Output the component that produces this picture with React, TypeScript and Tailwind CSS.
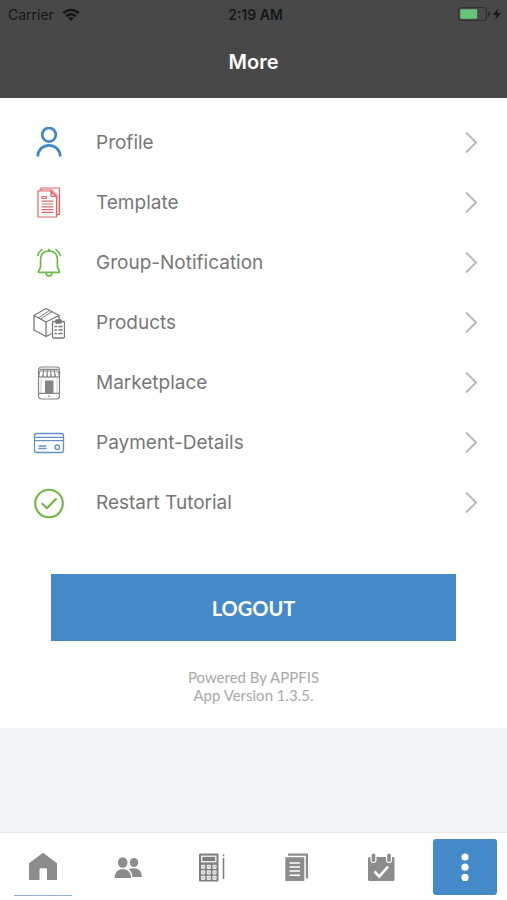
import type { ReactNode } from "react";

const line = {
  fill: "none",
  strokeLinecap: "round" as const,
  strokeLinejoin: "round" as const,
};

function Icon({ className = "", children }: { className?: string; children: ReactNode }) {
  return (
    <svg viewBox="0 0 32 32" className={`size-8 shrink-0 ${className}`} aria-hidden="true">
      {children}
    </svg>
  );
}

/* ── Menu icons ─────────────────────────────────────────────────────── */

function ProfileIcon() {
  return (
    <Icon className="text-[#3f87c9]">
      <g fill="none" stroke="currentColor" strokeWidth="2.7">
        <circle cx="16" cy="7.8" r="6.8" />
        <path d="M4.800 29.500c0-6.300 4.900-11.200 11.200-11.200s11.200 4.900 11.200 11.200" />
      </g>
    </Icon>
  );
}

function TemplateIcon() {
  return (
    <Icon className="text-[#d9696b]">
      <g {...line} stroke="currentColor" strokeWidth="1.200">
        <path d="M8 3V1h18.500v26.500H24" />
        <path d="M5 4h13l5.500 5.500V30H5z" />
        <path d="M18 4v5.500h5.500z" fill="currentColor" fillOpacity=".35" />
        <path d="M6.500 2.700h12.500l6 6v19.500" opacity=".6" />
        <path d="M9 9.500h4.500v2H9z" />
        <path d="M9 14.200h11M9 17h11M9 19.800h11M9 22.600h11M9 25.400h11" />
      </g>
    </Icon>
  );
}

function BellIcon() {
  return (
    <Icon className="text-[#6cbb4a]">
      <g {...line} stroke="currentColor" strokeWidth="1.700">
        <path d="M16 3.800c-5 0-8.400 3.500-8.400 8.500v7.500c0 2-2.100 2.700-2.100 5.500h21c0-2.800-2.100-3.500-2.100-5.500v-7.500c0-5-3.400-8.500-8.400-8.500z" />
        <path d="M16 3.800V2.300" />
        <path d="M13 26c.3 1.800 1.400 2.900 3 2.900s2.700-1.100 3-2.900" />
        <path d="M4.800 8.500c.6-2.400 1.900-4.400 4.200-5.900M27.200 8.500c-.6-2.400-1.900-4.400-4.200-5.900" />
      </g>
    </Icon>
  );
}

function ProductsIcon() {
  return (
    <Icon className="text-[#787878]">
      <g {...line} stroke="currentColor" strokeWidth="1.300">
        <path d="M18 27l-5 2.500L1 23V8.500l12-7 13 7V13" />
        <path d="M1 8.500l12 6.500 13-6.500M13 15v14.500" />
        <path d="M7.500 12l11.500-7.300M5.500 10.800l11-7.300" strokeWidth="1" />
        <rect x="19.500" y="14.500" width="12" height="16.500" rx="1.500" />
        <path d="M23 14v-1h5v3h-5z" fill="currentColor" />
        <path d="M22 19.500h1.500M26 19.500h3M22 23h1.500M26 23h3M22 26.500h1.500M26 26.500h3" strokeWidth="1.500" />
      </g>
    </Icon>
  );
}

function MarketplaceIcon() {
  return (
    <svg viewBox="0 0 32 34" className="h-[34px] w-8 shrink-0 text-[#858585]" aria-hidden="true">
      <g {...line} stroke="currentColor" strokeWidth="1.200">
        <rect x="5.500" y="1" width="21" height="32" rx="3" />
        <path d="M7 3.300h18" />
        <path d="M7 5L5.700 9c0 1.600 1.200 2.200 2.300 2.200s2-.8 2-2c0 1.200.9 2 2 2s2-.8 2-2c0 1.200.9 2 2 2s2-.8 2-2c0 1.200.9 2 2 2s2-.8 2-2c0 1.200.9 2 2 2s2.300-.6 2.300-2.200L25 5z" />
        <path d="M10 9l.7-4M14 9l.3-4M18 9l-.3-4M22 9l-.7-4" />
        <path d="M6 27.300h20" />
        <path d="M15.500 30.200h1" />
      </g>
      <path d="M12 14.500h8.500V27H12z" fill="currentColor" />
      <path d="M8 12.500v14M24 12.500v14" stroke="currentColor" strokeWidth=".6" opacity=".6" />
    </svg>
  );
}

function PaymentIcon() {
  return (
    <Icon className="text-[#6590cc]">
      <g {...line} stroke="currentColor" strokeWidth="1.300">
        <rect x="1.500" y="6.500" width="29" height="19" rx="2.200" />
        <path d="M1.500 10.300h29M1.500 13.700h29" />
        <path d="M6 19h7M6 21.500h7" />
        <circle cx="24.300" cy="20.200" r="2.200" />
      </g>
    </Icon>
  );
}

function TutorialIcon() {
  return (
    <Icon className="text-[#6fb745]">
      <g {...line} stroke="currentColor" strokeWidth="2.100">
        <circle cx="16" cy="16.500" r="13.800" />
        <path d="M9.300 16.800l4.600 4.500 9-9.300" />
      </g>
    </Icon>
  );
}

/* ── Tab bar icons ──────────────────────────────────────────────────── */

function HomeIcon() {
  return (
    <Icon>
      <path d="M16 2.800L30 13.200V30H20V19.300a1 1 0 0 0-1-1h-5.500a1 1 0 0 0-1 1V30H2V13.200z" fill="currentColor" />
    </Icon>
  );
}

function PeopleIcon() {
  return (
    <Icon>
      <g fill="currentColor">
        <ellipse cx="10.700" cy="11.500" rx="4.800" ry="5.200" />
        <path d="M2.600 27c0-5.500 3.200-9 8.200-9s8.200 3.500 8.200 9z" />
        <ellipse cx="22" cy="11.500" rx="4.200" ry="4.600" />
        <path d="M17 18.300c1.300-.7 3-1 5-1 4.800 0 7.900 3.200 7.900 8.700h-9.500c-.3-3.300-1.400-6-3.400-7.700z" />
      </g>
    </Icon>
  );
}

function CalculatorIcon() {
  return (
    <Icon className="text-[#7f7f7f]">
      <rect x="3" y="2.500" width="19.500" height="28" rx="1" fill="currentColor" />
      <rect x="5" y="4.500" width="15.500" height="7" fill="#e6e6e6" />
      <rect x="6.500" y="6" width="12.500" height="4" fill="currentColor" />
      <g fill="#e6e6e6">
        {[13.700, 19.200, 24.700].map((y) =>
          [5, 10.700, 16.400].map((x) => <rect key={`${x}-${y}`} x={x} y={y} width="4.200" height="4.200" rx=".8" />)
        )}
      </g>
      <g stroke="currentColor" strokeWidth=".7" opacity=".6">
        <path d="M6 15.800h2.200M11.700 15.800h2.200M17.400 15.800h2.200M6 21.300h2.200M11.700 21.300h2.200M17.400 21.300h2.200M6 26.800h2.200M11.700 26.800h2.200M17.400 26.800h2.200" />
      </g>
      <path d="M27.500 3.500v1.700M27.500 7v21" stroke="currentColor" strokeWidth="1.600" />
    </Icon>
  );
}

function DocumentsIcon() {
  return (
    <Icon>
      <path d="M7 2.500h20v25h-2.200V4.700H7z" fill="currentColor" />
      <path d="M4.300 6.200H23.300V30H4.300z" fill="currentColor" />
      <path d="M8.500 12h10.500M8.500 16h10.500M8.500 20h10.500M8.500 24.200h10.500" stroke="#fff" strokeWidth="1.400" />
    </Icon>
  );
}

function CalendarIcon() {
  return (
    <Icon>
      <rect x="3" y="6" width="26.500" height="24" rx="1.500" fill="currentColor" />
      <rect x="5.500" y="2" width="6" height="10" rx="3" fill="#fff" />
      <rect x="21" y="2" width="6" height="10" rx="3" fill="#fff" />
      <rect x="6.700" y="2.500" width="3.600" height="8.500" rx="1.800" fill="currentColor" />
      <rect x="22.200" y="2.500" width="3.600" height="8.500" rx="1.800" fill="currentColor" />
      <path d="M9.500 20.500l4.700 5L23 15.700" fill="none" stroke="#fff" strokeWidth="2.600" />
    </Icon>
  );
}

function DotsIcon() {
  return (
    <Icon>
      <g fill="currentColor">
        <circle cx="16" cy="6" r="3.600" />
        <circle cx="16" cy="16.200" r="3.600" />
        <circle cx="16" cy="26.400" r="3.600" />
      </g>
    </Icon>
  );
}

const menu = [
  { label: "Profile", icon: <ProfileIcon /> },
  { label: "Template", icon: <TemplateIcon /> },
  { label: "Group-Notification", icon: <BellIcon /> },
  { label: "Products", icon: <ProductsIcon /> },
  { label: "Marketplace", icon: <MarketplaceIcon /> },
  { label: "Payment-Details", icon: <PaymentIcon /> },
  { label: "Restart Tutorial", icon: <TutorialIcon /> },
];

const tabs = [
  { label: "Contacts", icon: <PeopleIcon /> },
  { label: "Calculator", icon: <CalculatorIcon /> },
  { label: "Documents", icon: <DocumentsIcon /> },
  { label: "Calendar", icon: <CalendarIcon /> },
];

function StatusBar() {
  return (
    <div className="grid grid-cols-3 items-center pl-2 pr-1 h-7 text-[14px] text-[#171717]">
      <div className="flex items-center gap-2">
        <span>Carrier</span>
        <svg viewBox="0 0 18 13" className="w-[18px] h-[13px]" aria-hidden="true">
          <g fill="none" stroke="currentColor" strokeWidth="2.500">
            <path d="M1.200 5.200c4.400-4.300 11.200-4.300 15.600 0" />
            <path d="M4.100 8.300c2.800-2.700 7-2.700 9.800 0" />
          </g>
          <path d="M9 13l-3-3c1.700-1.400 4.300-1.400 6 0z" fill="currentColor" />
        </svg>
      </div>
      <span className="text-center font-semibold">2:19 AM</span>
      <svg viewBox="0 0 46 16" className="justify-self-end w-[46px] h-4" aria-hidden="true">
        <rect x="1.500" y="1.500" width="28" height="13" rx="3" fill="none" stroke="#303030" strokeWidth="1.200" />
        <rect x="3.200" y="3.200" width="17" height="9.600" rx="1" fill="#67c577" />
        <path d="M31 5.500c1.600.5 2.300 1.300 2.300 2.500s-.7 2-2.300 2.500z" fill="#303030" />
        <path d="M41.500 2L36 9h3.500L38 14l6-7h-3.700z" fill="currentColor" />
      </svg>
    </div>
  );
}

export default function App() {
  return (
    <div className="flex min-h-screen flex-col bg-[#f2f3f6] font-['Inter','Liberation_Sans',sans-serif]">
      <header className="h-[98px] bg-[#484848]">
        <StatusBar />
        <h1 className="mt-5 text-center text-[20px] leading-7 font-semibold text-white">More</h1>
      </header>

      <main className="bg-white pt-[15px] pb-6">
        <ul>
          {menu.map((item) => (
            <li key={item.label}>
              <button type="button" className="flex h-[60px] w-full items-center pl-[33px] pr-7 text-left">
                {item.icon}
                <span className="ml-[31px] flex-1 text-[19px] text-[#777777]">{item.label}</span>
                <svg viewBox="0 0 16 24" className="h-6 w-4" aria-hidden="true">
                  <path d="M3 1.500l10 10-10 10" fill="none" stroke="#b9b9b9" strokeWidth="2" />
                </svg>
              </button>
            </li>
          ))}
        </ul>

        <div className="mt-[41px] px-[51px]">
          <button type="button" className="h-[67px] w-full bg-[#4489c8] font-['Lato',sans-serif] text-[20px] font-bold text-white">
            LOGOUT
          </button>
        </div>

        <p className="mt-[27px] text-center font-['Lato',sans-serif] text-[15px] leading-[18px] text-[#a9a9a9]">
          Powered By APPFIS
          <br />
          App Version 1.3.5.
        </p>
      </main>

      <nav className="mt-auto grid h-[68px] grid-cols-6 border-t border-[#e8e8ea] bg-white pl-0.5 text-[#8c8c8c]">
        <button type="button" aria-label="Home" className="mr-[14px] mb-1 ml-3 flex items-center justify-center border-b border-[#8fb0cc] pt-1">
          <HomeIcon />
        </button>
        {tabs.map((tab) => (
          <button key={tab.label} type="button" aria-label={tab.label} className="flex items-center justify-center">
            {tab.icon}
          </button>
        ))}
        <button type="button" aria-label="More" className="mx-[10px] mt-[6px] mb-[5px] flex items-center justify-center rounded-[3px] bg-[#4489c8] text-white">
          <DotsIcon />
        </button>
      </nav>
    </div>
  );
}
